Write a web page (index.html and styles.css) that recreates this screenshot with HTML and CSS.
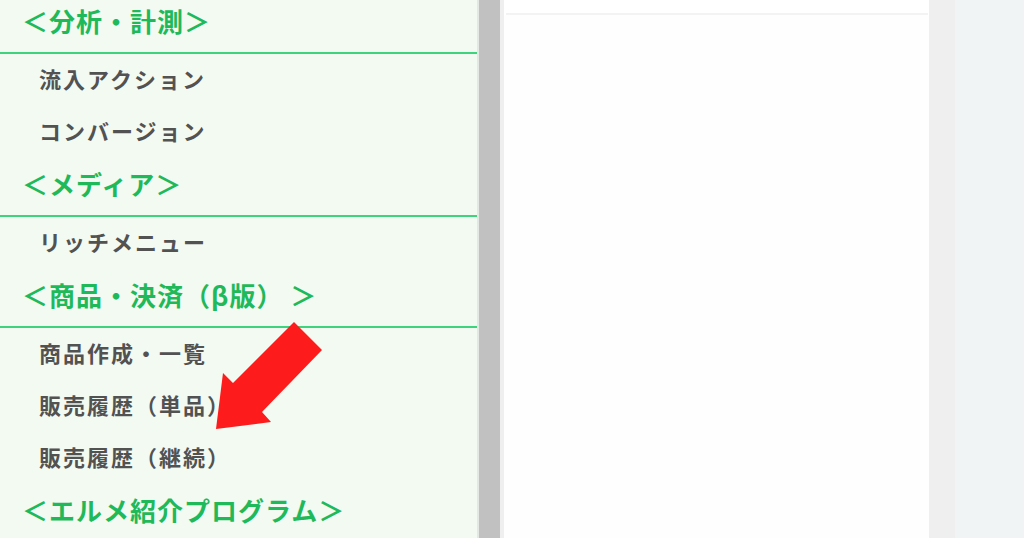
FILE: index.html
```
<!DOCTYPE html>
<html lang="ja">
<head>
    <meta charset="UTF-8">
    <title>メニュー</title>
    <link rel="stylesheet" href="styles.css">
</head>
<body>
    <div class="layout">
        <nav class="sidebar">
            <div class="menu">
                <div class="menu_head">＜分析・計測＞</div>
                <div class="menu_item">流入アクション</div>
                <div class="menu_item">コンバージョン</div>
                <div class="menu_head">＜メディア＞</div>
                <div class="menu_item">リッチメニュー</div>
                <div class="menu_head">＜商品・決済（β版） ＞</div>
                <div class="menu_item">商品作成・一覧</div>
                <div class="menu_item">販売履歴（単品）</div>
                <div class="menu_item">販売履歴（継続）</div>
                <div class="menu_head menu_head--last">＜エルメ紹介プログラム＞</div>
            </div>
        </nav>
        <div class="scrollbar"></div>
        <div class="gutter"></div>
        <main class="content">
            <div class="content_top"></div>
            <div class="content_body"></div>
        </main>
        <div class="gap"></div>
        <div class="rest"></div>
    </div>

    <svg class="arrow" width="1024" height="538" viewBox="0 0 1024 538">
        <polygon points="294,322 322,350 262,412 271,422 216,429 223,373 233,383" fill="#fd1b1b" />
    </svg>
</body>
</html>
```

FILE: styles.css
```
html,
body {
    margin: 0;
    padding: 0;
    width: 100%;
    height: 100%;
    overflow: hidden;
    font-family: "Noto Sans CJK JP", "Noto Sans", sans-serif;
}

.layout {
    display: flex;
    height: 100%;
}

.sidebar {
    width: 477px;
    flex-shrink: 0;
    background: #f3faf2;
    border-right: 2px solid #e4e8e4;
    overflow: hidden;
}

.menu {
    margin-top: -5px;
}

.menu_head {
    height: 57px;
    line-height: 52px;
    padding-left: 22px;
    font-size: 26px;
    font-weight: bold;
    letter-spacing: 1px;
    color: #1fb95a;
    border-bottom: 2px solid #3ed37c;
    white-space: pre;
}

.menu_head--last {
    border-bottom: none;
}

.menu_item {
    height: 52px;
    line-height: 48px;
    padding-left: 39px;
    font-size: 22px;
    font-weight: bold;
    letter-spacing: 2px;
    color: #525252;
    white-space: nowrap;
}

.scrollbar {
    width: 21px;
    flex-shrink: 0;
    background: #c1c1c1;
}

.gutter {
    width: 4px;
    flex-shrink: 0;
    background: #efefef;
}

.content {
    width: 425px;
    flex-shrink: 0;
    display: flex;
    flex-direction: column;
    background: #ffffff;
}

.content_top {
    height: 13px;
    margin: 0 1px 0 2px;
    background: #ffffff;
    border-bottom: 2px solid #f3f3f3;
}

.content_body {
    flex: 1;
    background: #fefefe;
}

.gap {
    width: 26px;
    flex-shrink: 0;
    background: #efefef;
}

.rest {
    flex: 1;
    background: #f0f4f4;
}

.arrow {
    position: absolute;
    left: 0;
    top: 0;
    pointer-events: none;
}
```
